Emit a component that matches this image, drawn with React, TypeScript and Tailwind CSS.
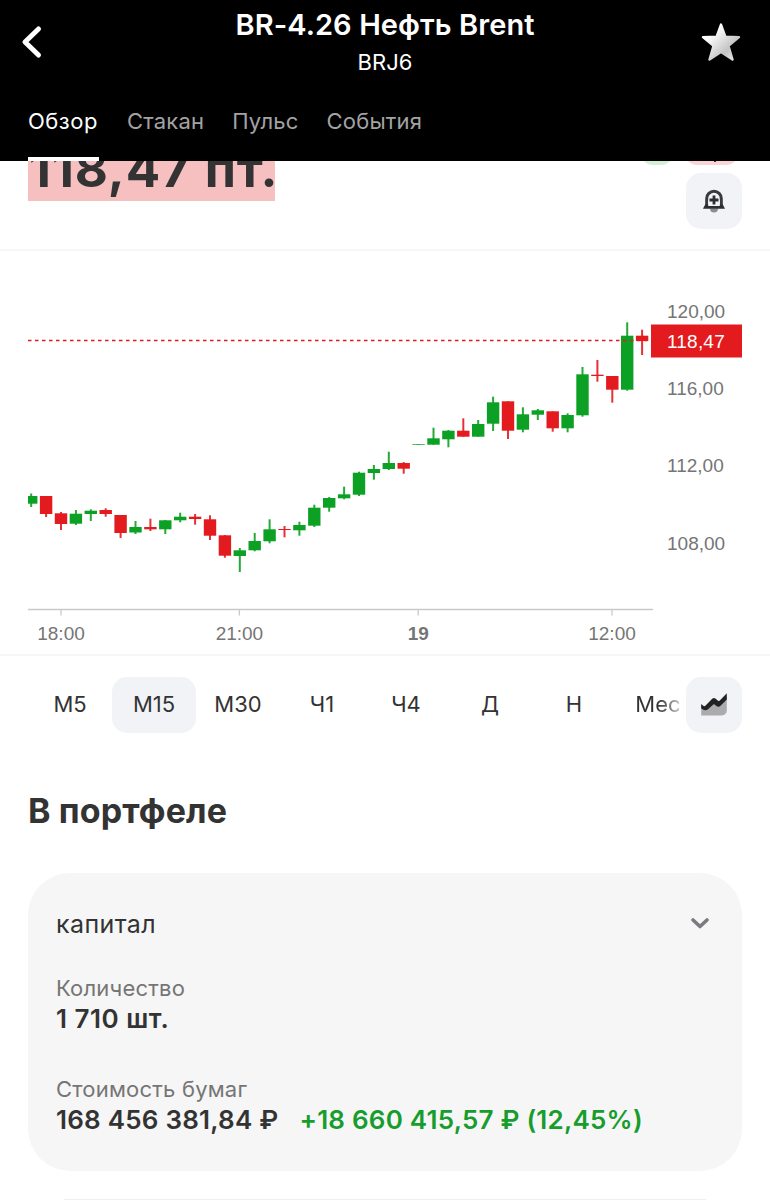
import type { ReactNode } from 'react';
import { clsx } from 'clsx';

const tabs = ['Обзор', 'Стакан', 'Пульс', 'События'];
const timeframes = ['M5', 'M15', 'M30', 'Ч1', 'Ч4', 'Д', 'Н', 'Мес'];

const GREEN = '#0ca124';
const RED = '#e31b1f';

type Candle = [high: number, top: number, bottom: number, low: number, up: boolean];

// vertical positions inside the chart area, one entry per 15 minutes
const candles: Candle[] = [
  [493.5, 496, 503.7, 507, true],
  [496, 496, 514, 517, false],
  [512, 513.3, 524, 530, false],
  [510, 513.7, 523.7, 525, true],
  [509.3, 510.7, 514, 521, true],
  [508.3, 510, 514, 516.7, false],
  [515, 515, 533, 538, false],
  [521, 527, 532.5, 534, true],
  [518.7, 527, 529.3, 531, false],
  [520, 520.3, 529.3, 534, true],
  [512.7, 516.7, 520.3, 522.3, true],
  [514, 516.7, 519, 524.7, false],
  [515.3, 519.3, 535.7, 540, false],
  [535, 535.3, 555.7, 557.7, false],
  [548, 550.3, 556, 572, true],
  [533, 541, 550.3, 551.3, true],
  [519.3, 529.3, 541.3, 543.3, true],
  [526, 529, 530, 537.3, false],
  [521.7, 525, 530.3, 535.7, true],
  [504.7, 507.7, 525.7, 527, true],
  [497, 498, 507.7, 511.7, true],
  [486.7, 494.3, 498.3, 499.3, true],
  [471.7, 472.7, 494.7, 496, true],
  [465, 469, 473, 479.7, true],
  [451.7, 463, 469, 470, true],
  [462, 463, 468.7, 473.7, false],
  [444, 444, 444.7, 444.7, true],
  [427.7, 438.3, 444.7, 444.7, true],
  [430, 430.7, 439.3, 447.3, true],
  [418.3, 430.7, 436.7, 436.7, false],
  [420, 424, 436.7, 436.7, true],
  [396.7, 402.3, 423.7, 431, true],
  [401.3, 401.3, 430.7, 439, false],
  [407.3, 414.3, 429.7, 432.3, true],
  [409, 410.3, 414.7, 420, true],
  [411.3, 411.3, 428.3, 431.7, false],
  [413.3, 415, 428.3, 432.3, true],
  [367, 374.3, 415.3, 416.7, true],
  [360, 374.7, 376, 381.7, false],
  [376, 376, 389.7, 402.7, false],
  [322.3, 335.7, 389.7, 390.7, true],
  [329.7, 335.7, 341, 355, false],
];

const prices = [
  { label: '120,00', y: 318 },
  { label: '116,00', y: 395 },
  { label: '112,00', y: 472 },
  { label: '108,00', y: 549.5 },
];

const times = [
  { label: '18:00', x: 61 },
  { label: '21:00', x: 239.4 },
  { label: '19', x: 418.2, bold: true },
  { label: '12:00', x: 612 },
];

function Header() {
  return (
    <header className="relative z-10 flex h-[161px] flex-col bg-black text-white">
      <div className="flex h-[84px] items-center justify-between pr-[29px] pl-[21px]">
        <svg width="22" height="34" viewBox="0 0 22 34" fill="none">
          <path d="M17.5 4 4 17l13.500 13" stroke="#fff" strokeWidth="5" strokeLinecap="round" strokeLinejoin="round" />
        </svg>
        <div className="flex flex-col items-center pl-[26px]">
          <h1 className="h-[43px] pt-[5px] text-[29px] leading-[40px] font-semibold tracking-[0.08px] whitespace-nowrap">
            BR-4.26 Нефть Brent
          </h1>
          <p className="h-[41px] text-[22px] leading-[38px] tracking-[0.1px]">BRJ6</p>
        </div>
        <svg width="40" height="40" viewBox="0 0 40 40">
          <defs>
            <linearGradient id="star" x1="0" y1="0" x2="1" y2="1">
              <stop offset="0.25" stopColor="#ffffff" />
              <stop offset="0.7" stopColor="#c4c4c4" />
              <stop offset="1" stopColor="#ededed" />
            </linearGradient>
          </defs>
          <path
            d="M20 2.600l4.500 12.200 13.500.3-10.500 8.700 4 13.700L20 30l-11.500 7.500 4-13.700L2 15.100l13.500-.3z"
            fill="url(#star)"
            stroke="url(#star)"
            strokeWidth="2.400"
            strokeLinejoin="round"
          />
        </svg>
      </div>
      <nav className="ml-[28px] flex h-[77px] gap-[28px] text-[22px] leading-[75px] tracking-[0.2px]">
        {tabs.map((tab, i) => (
          <div
            key={tab}
            className={clsx(
              'h-[77px] border-b-4',
              i === 0 ? 'w-[71px] border-white tracking-[0.5px] text-white' : 'border-transparent text-[#a3a3a3]'
            )}
          >
            {tab}
          </div>
        ))}
      </nav>
    </header>
  );
}

function IconButton({ children }: { children: ReactNode }) {
  return (
    <button className="flex h-[56px] w-[56px] shrink-0 items-center justify-center rounded-[15px] bg-[#f2f3f7]">
      {children}
    </button>
  );
}

function PriceBar() {
  return (
    <section className="flex h-[90px] items-start justify-between border-b-2 border-[#f6f6f6] pr-[28px] pl-[28px]">
      {/* the price is scrolled halfway under the header */}
      <div className="-mt-[19px] h-[59px] w-[247px] bg-[#f6bfc0] pl-px text-[51px] leading-[53px] font-bold tracking-[0.9px] whitespace-nowrap text-[#333]">
        118,47 пт.
      </div>
      <div className="flex flex-col items-end">
        <div className="-mt-[26px] mr-[4px] flex h-[38px] gap-[12px] pb-[8px]">
          <span className="h-[30px] w-[32px] rounded-[12px] bg-[#d3efd8]" />
          <span className="flex h-[30px] w-[53px] items-end justify-center rounded-[12px] bg-[#fbd5d6] pl-[6px] pb-[3px]">
            <span className="h-[3px] w-[2px] bg-[#333]" />
          </span>
        </div>
        <IconButton>
          <svg width="24" height="26" viewBox="0 0 24 26" fill="none">
            <path d="M8 20.500a4 4 0 0 0 8 0z" fill="#8b8d90" />
            <path d="M4.700 18v-7.500a7.300 7.300 0 0 1 14.600 0V18" stroke="#3a3a3c" strokeWidth="3" />
            <path d="M3.200 16.500h17.600l2.200 4.300H1z" fill="#2e2e30" />
            <path d="M6.200 12h11.600v6H6.200z" fill="#f2f3f7" />
            <path d="M12 7.500v9M7.500 12h9" stroke="#2e2e30" strokeWidth="2.800" />
          </svg>
        </IconButton>
      </div>
    </section>
  );
}

function Chart() {
  return (
    <section className="h-[405px] border-b-2 border-[#f6f6f6]">
      <svg width="770" height="403" viewBox="0 251 770 403" className="block font-['Liberation_Sans',Arial,sans-serif]">
        <clipPath id="plot">
          <rect x="28" y="251" width="625" height="403" />
        </clipPath>
        <g clipPath="url(#plot)">
          {candles.map(([high, top, bottom, low, up], i) => {
            const x = 31.2 + i * 14.9;
            return (
              <g key={i} fill={up ? GREEN : RED}>
                <rect x={x - 1} y={high} width="2" height={low - high} opacity="0.9" />
                <rect x={x - 6.2} y={top} width="12.400" height={bottom - top} />
              </g>
            );
          })}
        </g>
        <path d="M28 340.500h622" stroke={RED} strokeWidth="1.600" strokeDasharray="3.500 3.500" />
        <path d="M28 609.500h625" stroke="#c9c9c9" strokeWidth="1.300" />
        {times.map((t) => (
          <g key={t.label}>
            <path d={`M${t.x} 609.500v6`} stroke="#c9c9c9" strokeWidth="1.300" />
            <text x={t.x} y="640" textAnchor="middle" fontSize="19" fontWeight={t.bold ? 700 : 400} fill="#757575">
              {t.label}
            </text>
          </g>
        ))}
        {prices.map((p) => (
          <text key={p.label} x="667" y={p.y} fontSize="19" fill="#757575">
            {p.label}
          </text>
        ))}
        <rect x="651" y="324.500" width="91" height="33" fill={RED} />
        <text x="667" y="348" fontSize="19" letterSpacing="0.200" fill="#fff">
          118,47
        </text>
      </svg>
    </section>
  );
}

function Timeframes() {
  return (
    <section className="flex h-[77px] items-start pt-[21px] pl-[28px]">
      <div className="flex w-[658px] overflow-hidden text-[22px] leading-[54px] text-[#333]">
        {timeframes.map((t) => (
          <button
            key={t}
            className={clsx(
              'h-[56px] w-[84px] shrink-0 rounded-[15px] pb-[2px]',
              t === 'M15' && 'bg-[#f2f3f7]',
              t === 'Мес' && 'bg-linear-to-r from-[#333] from-50% to-white to-85% bg-clip-text text-transparent'
            )}
          >
            {t}
          </button>
        ))}
      </div>
      <IconButton>
        <svg width="28" height="26" viewBox="0 0 28 26" fill="none">
          <path d="M1.200 14l4 1 9-6 4 2 8.600-6v13.500a5 5 0 0 1-5 5H1.200z" fill="#ababae" />
          <path
            d="M1.200 12l2.400 1.900q1 .7 2-.3l6.600-6.800q1.700-1.600 3.500-.1l2.300 2q.9.700 1.800-.1l7-7.300v6.100l-6.300 6.400q-2 1.900-4.100.2l-1.700-1.500q-.9-.7-1.700.2l-4.700 4.300q-2.800 2.200-5.300.6l-1.800-1z"
            fill="#222"
          />
        </svg>
      </IconButton>
    </section>
  );
}

function Portfolio() {
  return (
    <section className="px-[28px]">
      <h2 className="h-[140px] pt-[53px] text-[34px] leading-[50px] font-bold tracking-[0.1px] text-[#333]">В портфеле</h2>
      <div className="h-[298px] rounded-[42px] bg-[#f6f6f6] px-[28px] pt-[30px] text-[#333]">
        <div className="flex h-[42px] items-center justify-between pr-[4px]">
          <p className="pt-px text-[25px] tracking-[0.4px]">капитал</p>
          <svg width="20" height="14" viewBox="0 0 20 14" fill="none">
            <path d="M3 3l7 6.500L17 3" stroke="#7a7a80" strokeWidth="3.600" strokeLinecap="round" strokeLinejoin="round" />
          </svg>
        </div>
        <p className="mt-[28px] text-[22px] leading-[30px] tracking-[0.2px] text-[#757575]">Количество</p>
        <p className="text-[26px] leading-[32px] font-semibold tracking-[0.5px]">1 710 шт.</p>
        <p className="mt-[39px] text-[22px] leading-[30px] tracking-[0.2px] text-[#757575]">Стоимость бумаг</p>
        <p className="flex gap-[21px] text-[26px] leading-[32px] font-semibold tracking-[0.22px] whitespace-nowrap">
          <span>168 456 381,84 ₽</span>
          <span className="text-[#179c2e]">+18 660 415,57 ₽ (12,45%)</span>
        </p>
      </div>
      <div className="mx-[36px] mt-[28px] h-px bg-[#f0f0f0]" />
    </section>
  );
}

export default function App() {
  return (
    <main className="h-[1200px] w-[770px] overflow-hidden bg-white font-['Inter','Noto_Sans',sans-serif]">
      <Header />
      <PriceBar />
      <Chart />
      <Timeframes />
      <Portfolio />
    </main>
  );
}
